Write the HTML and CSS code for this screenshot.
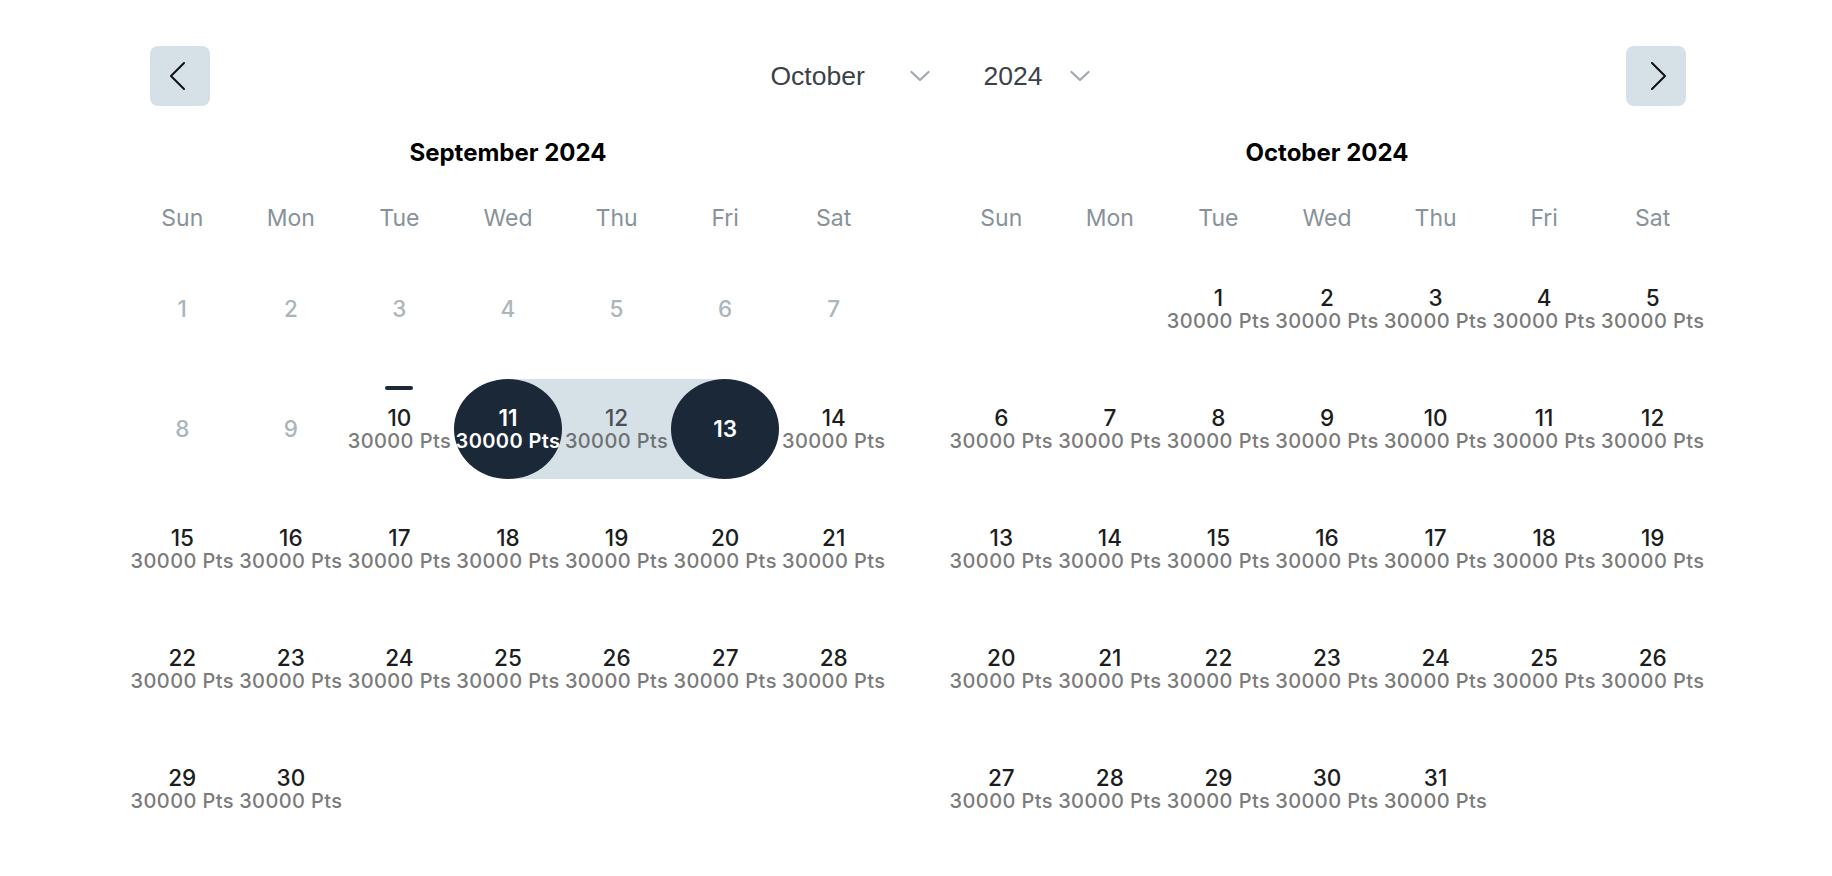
FILE: index.html
```html
<!DOCTYPE html>
<html lang="en">
<head>
  <meta charset="UTF-8" />
  <meta name="viewport" content="width=device-width, initial-scale=1" />
  <title>Date Range Picker</title>
  <link rel="stylesheet" href="styles.css">
</head>
<body>
  <div class="picker">
    <div class="picker-header">
      <button class="nav-btn" id="prev-btn" aria-label="Previous month">
        <svg width="28" height="28" viewBox="0 0 28 28" fill="none" stroke="#111" stroke-width="2" stroke-linecap="round" stroke-linejoin="round"><path d="M18 1 L5 14 L18 27"/></svg>
      </button>

      <div class="selects">
        <div class="select select-month">
          <span>October</span>
          <svg width="20" height="12" viewBox="0 0 20 12" fill="none" stroke="#a3a9ae" stroke-width="2.2" stroke-linecap="round" stroke-linejoin="round"><path d="M1.5 2 L10 10 L18.5 2"/></svg>
        </div>
        <div class="select select-year">
          <span>2024</span>
          <svg width="20" height="12" viewBox="0 0 20 12" fill="none" stroke="#a3a9ae" stroke-width="2.2" stroke-linecap="round" stroke-linejoin="round"><path d="M1.5 2 L10 10 L18.5 2"/></svg>
        </div>
      </div>

      <button class="nav-btn" id="next-btn" aria-label="Next month">
        <svg width="28" height="28" viewBox="0 0 28 28" fill="none" stroke="#111" stroke-width="2" stroke-linecap="round" stroke-linejoin="round"><path d="M10 1 L23 14 L10 27"/></svg>
      </button>
    </div>

    <div class="months">
      <div class="month">
        <h2 class="month-title">September 2024</h2>
        <div class="weekdays">
          <span>Sun</span><span>Mon</span><span>Tue</span><span>Wed</span><span>Thu</span><span>Fri</span><span>Sat</span>
        </div>
        <div class="days" id="days-sep"></div>
      </div>

      <div class="month">
        <h2 class="month-title">October 2024</h2>
        <div class="weekdays">
          <span>Sun</span><span>Mon</span><span>Tue</span><span>Wed</span><span>Thu</span><span>Fri</span><span>Sat</span>
        </div>
        <div class="days" id="days-oct"></div>
      </div>
    </div>
  </div>

  <script>
    // --- build the two month grids ---
    const today = { month: 8, day: 10 };
    const rangeStart = { month: 8, day: 11 };
    const rangeEnd = { month: 8, day: 13 };

    function renderMonth(containerId, year, month) {
      const container = document.getElementById(containerId);
      const firstDay = new Date(year, month, 1).getDay();
      const daysInMonth = new Date(year, month + 1, 0).getDate();

      for (let i = 0; i < firstDay; i++) {
        const empty = document.createElement('div');
        empty.className = 'day empty';
        container.appendChild(empty);
      }

      for (let d = 1; d <= daysInMonth; d++) {
        const cell = document.createElement('div');
        cell.className = 'day';

        const inner = document.createElement('div');
        inner.className = 'day-inner';

        const num = document.createElement('span');
        num.className = 'day-num';
        num.textContent = d;
        inner.appendChild(num);

        const isPast = month === today.month && d < today.day;
        const isStart = month === rangeStart.month && d === rangeStart.day;
        const isEnd = month === rangeEnd.month && d === rangeEnd.day;
        const inRange = month === rangeStart.month && d > rangeStart.day && d < rangeEnd.day;

        if (isPast) {
          cell.classList.add('disabled');
        } else if (!isEnd) {
          const pts = document.createElement('span');
          pts.className = 'day-pts';
          pts.textContent = '30000 Pts';
          inner.appendChild(pts);
        }

        if (month === today.month && d === today.day) cell.classList.add('today');
        if (isStart) cell.classList.add('selected', 'range-start');
        if (isEnd) cell.classList.add('selected', 'range-end');
        if (inRange) cell.classList.add('in-range');

        cell.appendChild(inner);
        container.appendChild(cell);
      }
    }

    renderMonth('days-sep', 2024, 8);
    renderMonth('days-oct', 2024, 9);
  </script>
</body>
</html>
```

FILE: styles.css
```css
body {
  margin: 0;
  background: #ffffff;
  font-family: Inter, "Noto Sans", sans-serif;
  color: #1b1d20;
}

.picker {
  margin: 0 125px 0 128px;
  padding-top: 46px;
}

/* header: arrows + month / year selects */
.picker-header {
  display: flex;
  align-items: center;
  justify-content: space-between;
  height: 60px;
  padding: 0 21px 0 22px;
}

.nav-btn {
  width: 60px;
  height: 60px;
  padding: 0;
  border: none;
  border-radius: 8px;
  background: #d6e1e7;
  display: flex;
  align-items: center;
  justify-content: center;
  cursor: pointer;
}

.selects {
  display: flex;
  gap: 54px;
  margin-left: 24px;
}

.select {
  display: flex;
  align-items: center;
  justify-content: space-between;
  font-family: "Liberation Sans", Arial, sans-serif;
  font-size: 26.5px;
  color: #3b4148;
  cursor: pointer;
}

.select-month {
  width: 159px;
}

.select-year {
  width: 106px;
}

/* month grids */
.months {
  display: flex;
  gap: 59px;
  margin-top: 31px;
}

.month {
  width: 760px;
}

.month-title {
  margin: 0;
  text-align: center;
  font-size: 24px;
  font-weight: 700;
  line-height: 32px;
  color: #000000;
}

.weekdays {
  display: grid;
  grid-template-columns: repeat(7, 1fr);
  margin-top: 34px;
  font-size: 23px;
  line-height: 30px;
  text-align: center;
  color: #87929a;
}

.days {
  display: grid;
  grid-template-columns: repeat(7, 1fr);
  grid-auto-rows: 100px;
  row-gap: 20px;
  margin-top: 26px;
}

.day {
  position: relative;
}

.day-inner {
  height: 100%;
  display: flex;
  flex-direction: column;
  align-items: center;
  justify-content: center;
  white-space: nowrap;
}

.day-num {
  font-size: 22.5px;
  font-weight: 500;
  line-height: 24px;
}

.day-pts {
  font-size: 20px;
  font-weight: 500;
  line-height: 22px;
  letter-spacing: 0.4px;
  color: #7b7b7b;
}

.day.disabled .day-num {
  color: #abb5bc;
}

.day.today::before {
  content: "";
  position: absolute;
  top: 7px;
  left: 50%;
  width: 28px;
  height: 4px;
  margin-left: -14px;
  border-radius: 2px;
  background: #1a2838;
}

/* selected range */
.day.in-range {
  background: #d6e1e7;
}

.day.in-range .day-num {
  color: #4b5056;
}

.day.in-range .day-pts {
  color: #6e7174;
}

.day.range-start {
  background: linear-gradient(90deg, transparent 50%, #d6e1e7 50%);
}

.day.range-end {
  background: linear-gradient(90deg, #d6e1e7 50%, transparent 50%);
}

.day.selected .day-inner {
  border-radius: 50%;
  background: #1a2838;
  color: #ffffff;
}

.day.selected .day-num {
  font-weight: 600;
}

.day.selected .day-pts {
  color: #ffffff;
  font-weight: 600;
}
```
